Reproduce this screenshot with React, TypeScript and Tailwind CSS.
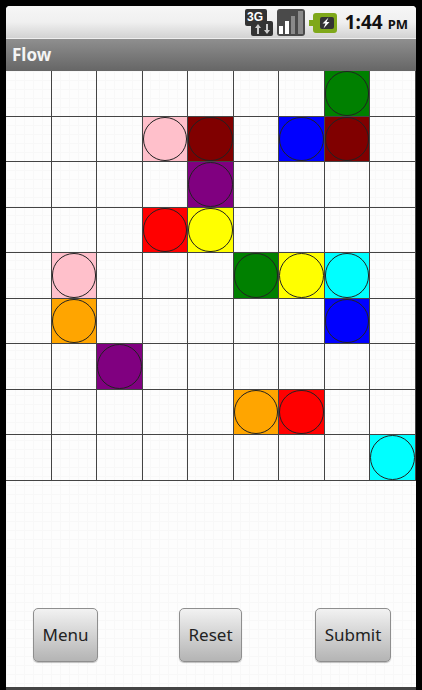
const colors: Record<string, string> = {
  '0-7': 'bg-[#008000]',
  '1-3': 'bg-[#ffc0cb]',
  '1-4': 'bg-[#800000]',
  '1-6': 'bg-[#0000ff]',
  '1-7': 'bg-[#800000]',
  '2-4': 'bg-[#800080]',
  '3-3': 'bg-[#ff0000]',
  '3-4': 'bg-[#ffff00]',
  '4-1': 'bg-[#ffc0cb]',
  '4-5': 'bg-[#008000]',
  '4-6': 'bg-[#ffff00]',
  '4-7': 'bg-[#00ffff]',
  '5-1': 'bg-[#ffa500]',
  '5-7': 'bg-[#0000ff]',
  '6-2': 'bg-[#800080]',
  '7-5': 'bg-[#ffa500]',
  '7-6': 'bg-[#ff0000]',
  '8-8': 'bg-[#00ffff]',
}

const cells = Array.from({ length: 81 }, (_, i) => `${Math.floor(i / 9)}-${i % 9}`)

function NetworkIcon() {
  return (
    <svg width="28" height="27" viewBox="0 0 28 27" className="mt-[3px]">
      <rect x="0" y="0" width="22" height="17" rx="2" fill="#333" />
      <rect x="6" y="12" width="22" height="15" rx="2" fill="#333" />
      <text x="2" y="12" fontSize="12" fontWeight="700" fill="#fff" fontFamily="Liberation Sans, sans-serif">3G</text>
      <path d="M12 25v-6h-2l3-4 3 4h-2v6zM21 15v6h-2l3 4 3-4h-2v-6z" fill="#ccc" />
    </svg>
  )
}

function SignalIcon() {
  return (
    <svg width="28" height="27" viewBox="0 0 28 27" className="mt-[3px]">
      <rect x="0" y="0" width="28" height="27" rx="3" fill="#4a4a4a" />
      <rect x="2" y="17" width="4" height="8" fill="#fff" />
      <rect x="8" y="12" width="4" height="13" fill="#fff" />
      <rect x="14" y="7" width="4" height="18" fill="#8a8a8a" />
      <rect x="21" y="2" width="5" height="23" fill="#8a8a8a" />
    </svg>
  )
}

function BatteryIcon() {
  return (
    <svg width="28" height="20" viewBox="0 0 28 20" className="mt-[7px]">
      <path d="M4 3a3 3 0 0 1 3-3h18a3 3 0 0 1 3 3v14a3 3 0 0 1-3 3H7a3 3 0 0 1-3-3v-4H0V7h4z" fill="#7fa81a" />
      <rect x="11" y="4" width="14" height="12" rx="2" fill="#333" />
      <path d="M19.5 4.5l-6 6h3l-2 5 6-6.5h-3z" fill="#fff" />
    </svg>
  )
}

function SoftButton({ label, width, extra = '' }: { label: string; width: string; extra?: string }) {
  return (
    <button className={`${width} ${extra} h-[54px] rounded-[5px] border border-[#8e8e8e] bg-gradient-to-b from-[#f2f2f2] to-[#b4b4b4] text-[17px] text-[#222] shadow-[0_1px_1px_rgba(0,0,0,0.25)]`}>
      {label}
    </button>
  )
}

export default function App() {
  return (
    <div className="h-[690px] w-[422px] overflow-hidden bg-black pt-[6px] pr-[6px] pl-[6px] font-['Noto_Sans',sans-serif]">
      <div className="flex h-[681px] w-[410px] flex-col overflow-hidden rounded-t-[4px] bg-white">
        <div className="flex h-[32px] shrink-0 items-start justify-end bg-gradient-to-b from-[#f6f6f6] via-[#f0f0f0] to-[#d2d2d2] pr-[8px]">
          <div className="flex items-start gap-[4px]">
            <NetworkIcon />
            <SignalIcon />
            <BatteryIcon />
            <div className="ml-[4px] flex items-baseline gap-[5px] pt-[5px] text-[#111]">
              <span className="text-[19px] leading-[22px] font-bold">1:44</span>
              <span className="text-[13px] leading-[22px] font-bold">PM</span>
            </div>
          </div>
        </div>
        <div className="flex h-[33px] shrink-0 items-center border-t border-[#eeeeee] bg-gradient-to-b from-[#8f8f8f] to-[#666666] pl-[6px]">
          <span className="text-[17px] font-bold text-[#f4f4f4]">Flow</span>
        </div>
        <div className="flex flex-1 flex-col bg-[#fdfdfd] bg-[linear-gradient(#f8f8f8_1px,transparent_1px),linear-gradient(90deg,#f8f8f8_1px,transparent_1px)] bg-size-[9px_9px]">
          <div className="grid h-[410px] w-[410px] shrink-0 grid-cols-9 grid-rows-9">
            {cells.map((key) => (
              <div key={key} className={`border-r border-b border-[#444] ${colors[key] ?? ''}`}>
                {colors[key] && <div className="h-full w-full rounded-full border border-[#222]" />}
              </div>
            ))}
          </div>
          <div className="flex flex-1 items-start pt-[127px] pl-[27px]">
            <SoftButton label="Menu" width="w-[65px]" />
            <SoftButton label="Reset" width="w-[63px]" extra="ml-[81px]" />
            <SoftButton label="Submit" width="w-[76px]" extra="ml-[73px]" />
          </div>
        </div>
      </div>
      <div className="h-[3px] w-[410px] bg-[#444]" />
    </div>
  )
}
